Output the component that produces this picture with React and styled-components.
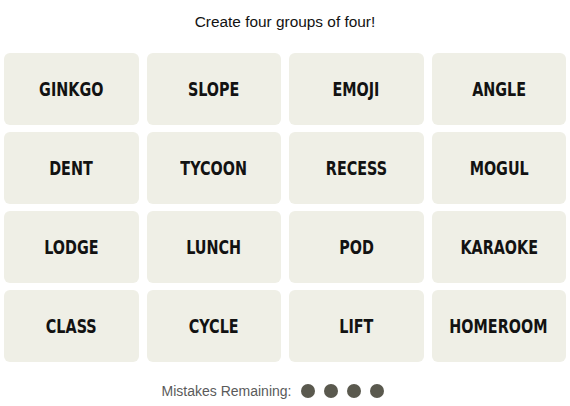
import React from 'react';
import styled, { createGlobalStyle } from 'styled-components';

const GlobalStyle = createGlobalStyle`
  body {
    margin: 0;
    background: #ffffff;
    font-family: "Liberation Sans", Arial, sans-serif;
  }
`;

const words = [
  'GINKGO', 'SLOPE', 'EMOJI', 'ANGLE',
  'DENT', 'TYCOON', 'RECESS', 'MOGUL',
  'LODGE', 'LUNCH', 'POD', 'KARAOKE',
  'CLASS', 'CYCLE', 'LIFT', 'HOMEROOM',
];

const App = () => {
  return (
    <Page>
      <GlobalStyle />
      <Prompt>Create four groups of four!</Prompt>
      <Board>
        {words.map((word) => (
          <Tile key={word}>
            <Word>{word}</Word>
          </Tile>
        ))}
      </Board>
      <Mistakes>
        Mistakes Remaining:
        <Dots>
          {[1, 2, 3, 4].map((n) => (
            <Dot key={n} />
          ))}
        </Dots>
      </Mistakes>
    </Page>
  );
};

const Page = styled.main`
  width: 570px;
  padding: 12px 4px 0;
  box-sizing: border-box;
`;

const Prompt = styled.h2`
  margin: 0 0 21px;
  text-align: center;
  font-size: 15.4px;
  font-weight: 400;
  line-height: 20px;
  color: #121212;
`;

const Board = styled.div`
  display: grid;
  grid-template-columns: repeat(4, 1fr);
  grid-auto-rows: 72px;
  column-gap: 8px;
  row-gap: 7px;
  width: 562px;
`;

const Tile = styled.button`
  display: flex;
  align-items: center;
  justify-content: center;
  border: none;
  border-radius: 6px;
  background: #efefe6;
  color: #121212;
  padding: 0;
`;

const Word = styled.span`
  display: inline-block;
  font-family: "DejaVu Sans Condensed", "DejaVu Sans", sans-serif;
  font-stretch: condensed;
  font-weight: 700;
  font-size: 19px;
  transform: scaleX(0.84);
  white-space: nowrap;
`;

const Mistakes = styled.div`
  display: flex;
  align-items: center;
  justify-content: center;
  gap: 10px;
  margin-top: 21px;
  padding-right: 24px;
  font-size: 14px;
  color: #5a5a5a;
`;

const Dots = styled.div`
  display: flex;
  gap: 9px;
`;

const Dot = styled.span`
  width: 14px;
  height: 14px;
  border-radius: 50%;
  background: #5a594e;
`;

export default App;
